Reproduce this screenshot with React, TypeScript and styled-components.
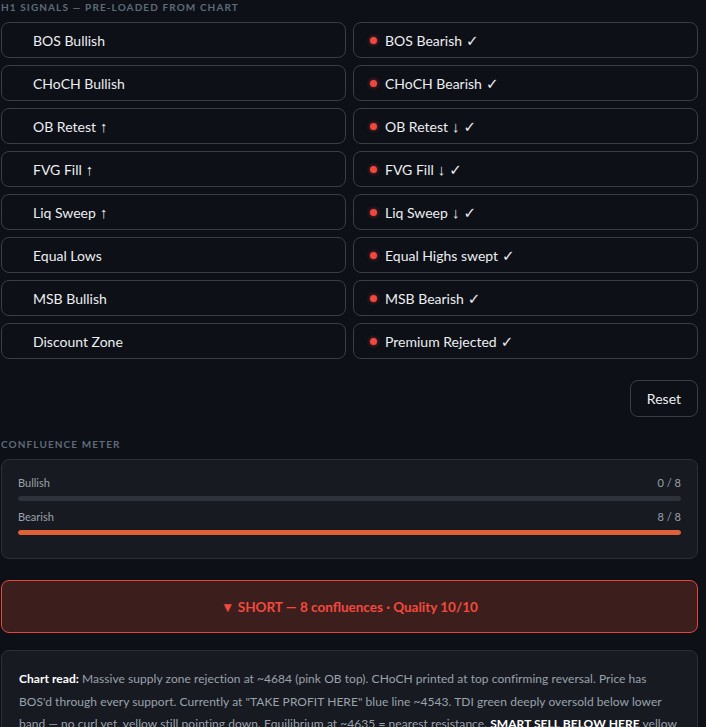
import React from "react";
import styled, { createGlobalStyle } from "styled-components";

const Global = createGlobalStyle`
  html, body { margin: 0; padding: 0; background: #0d1017; }
  body { font-family: Lato, "Noto Sans", sans-serif; color: #e6e8eb; }
  * { box-sizing: border-box; }
`;

const Page = styled.div`
  width: 706px;
  height: 727px;
  overflow: hidden;
  padding: 0 8px 0 1px;
  background: #0d1017;
`;

const SectionLabel = styled.div<{ $mt?: number }>`
  margin-top: ${(p) => p.$mt ?? 0}px;
  height: 14px;
  line-height: 14px;
  font-size: 10px;
  font-weight: 700;
  letter-spacing: 1.1px;
  text-transform: uppercase;
  color: #5f6b78;
  white-space: nowrap;
`;

const Grid = styled.div`
  margin-top: 8px;
  display: grid;
  grid-template-columns: 1fr 1fr;
  gap: 7px;
`;

const SignalButton = styled.button`
  height: 36px;
  display: flex;
  align-items: center;
  gap: 8px;
  padding: 0 16px;
  border: 1px solid #3a3d44;
  border-radius: 8px;
  background: transparent;
  color: #eceef1;
  font-family: inherit;
  font-size: 14px;
  text-align: left;
  cursor: pointer;
`;

const Label = styled.span`
  display: inline-flex;
  align-items: baseline;
  gap: 4px;
  height: 17px;
  line-height: 17px;
  white-space: nowrap;
`;

const Arrow = styled.span`
  font-family: "Liberation Sans", sans-serif;
  font-size: 15px;
  line-height: 1;
`;

const Check = styled.span`
  font-family: "DejaVu Sans", sans-serif;
  font-size: 15px;
  line-height: 1;
`;

const Dot = styled.span<{ $on: boolean }>`
  width: 7px;
  height: 7px;
  flex: none;
  border-radius: 50%;
  background: ${(p) => (p.$on ? "#f2473f" : "transparent")};
  box-shadow: ${(p) => (p.$on ? "0 0 4px rgba(242,71,63,0.6)" : "none")};
`;

const Actions = styled.div`
  margin-top: 21px;
  display: flex;
  justify-content: flex-end;
`;

const ResetButton = styled.button`
  height: 37px;
  padding: 0 16px;
  border: 1px solid #3a3d44;
  border-radius: 8px;
  background: transparent;
  color: #eceef1;
  font-family: inherit;
  font-size: 14px;
  cursor: pointer;
`;

const Card = styled.div<{ $mt: number }>`
  margin-top: ${(p) => p.$mt}px;
  background: #171a21;
  border: 1px solid #2b2f37;
  border-radius: 8px;
`;

const MeterCard = styled(Card)`
  padding: 16px 16px 23px;
`;

const MeterRow = styled.div`
  & + & {
    margin-top: 9px;
  }
`;

const MeterHead = styled.div`
  display: flex;
  justify-content: space-between;
  height: 14px;
  line-height: 14px;
  font-size: 11px;
  color: #9aa2ac;
`;

const Track = styled.div`
  margin-top: 6px;
  height: 5px;
  border-radius: 3px;
  background: #2e323a;
  overflow: hidden;
`;

const Fill = styled.div`
  height: 100%;
  border-radius: 3px;
  background: #e0603a;
`;

const Verdict = styled.div`
  margin-top: 21px;
  height: 53px;
  display: flex;
  align-items: center;
  justify-content: center;
  background: #3c1f1d;
  border: 1px solid #e5453c;
  border-radius: 8px;
  color: #f2493f;
  font-weight: 700;
  font-size: 13.5px;
`;

const NoteCard = styled(Card)`
  padding: 17px 17px;
  font-size: 12px;
  letter-spacing: 0.05px;
  line-height: 22.5px;
  color: #9aa2ac;
`;

const Strong = styled.b`
  color: #ffffff;
  font-weight: 700;
`;

type Sig = { text: string; dir?: "↑" | "↓" };

const signals: [Sig, Sig][] = [
  [{ text: "BOS Bullish" }, { text: "BOS Bearish" }],
  [{ text: "CHoCH Bullish" }, { text: "CHoCH Bearish" }],
  [{ text: "OB Retest", dir: "↑" }, { text: "OB Retest", dir: "↓" }],
  [{ text: "FVG Fill", dir: "↑" }, { text: "FVG Fill", dir: "↓" }],
  [{ text: "Liq Sweep", dir: "↑" }, { text: "Liq Sweep", dir: "↓" }],
  [{ text: "Equal Lows" }, { text: "Equal Highs swept" }],
  [{ text: "MSB Bullish" }, { text: "MSB Bearish" }],
  [{ text: "Discount Zone" }, { text: "Premium Rejected" }],
];

const meters = [
  { label: "Bullish", value: 0, total: 8 },
  { label: "Bearish", value: 8, total: 8 },
];

function Signal({ sig, active }: { sig: Sig; active: boolean }) {
  return (
    <SignalButton>
      <Dot $on={active} />
      <Label>
        {sig.text}
        {sig.dir && <Arrow>{sig.dir}</Arrow>}
        {active && <Check>✓</Check>}
      </Label>
    </SignalButton>
  );
}

export default function App() {
  return (
    <Page>
      <Global />
      <SectionLabel>H1 Signals — Pre-loaded from chart</SectionLabel>
      <Grid>
        {signals.map(([bull, bear]) => (
          <React.Fragment key={bull.text}>
            <Signal sig={bull} active={false} />
            <Signal sig={bear} active={true} />
          </React.Fragment>
        ))}
      </Grid>
      <Actions>
        <ResetButton>Reset</ResetButton>
      </Actions>
      <SectionLabel $mt={20}>Confluence meter</SectionLabel>
      <MeterCard $mt={8}>
        {meters.map((m) => (
          <MeterRow key={m.label}>
            <MeterHead>
              <span>{m.label}</span>
              <span>
                {m.value} / {m.total}
              </span>
            </MeterHead>
            <Track>
              <Fill style={{ width: `${(m.value / m.total) * 100}%` }} />
            </Track>
          </MeterRow>
        ))}
      </MeterCard>
      <Verdict>▼ SHORT — 8 confluences · Quality 10/10</Verdict>
      <NoteCard $mt={17}>
        <Strong>Chart read:</Strong> Massive supply zone rejection at ~4684 (pink OB top). CHoCH printed at top
        confirming reversal. Price has BOS'd through every support. Currently at "TAKE PROFIT HERE" blue line
        ~4543. TDI green deeply oversold below lower band — no curl yet, yellow still pointing down. Equilibrium
        at ~4635 = nearest resistance. <Strong>SMART SELL BELOW HERE</Strong> yellow line is the entry zone on
        any pullback.
      </NoteCard>
    </Page>
  );
}
